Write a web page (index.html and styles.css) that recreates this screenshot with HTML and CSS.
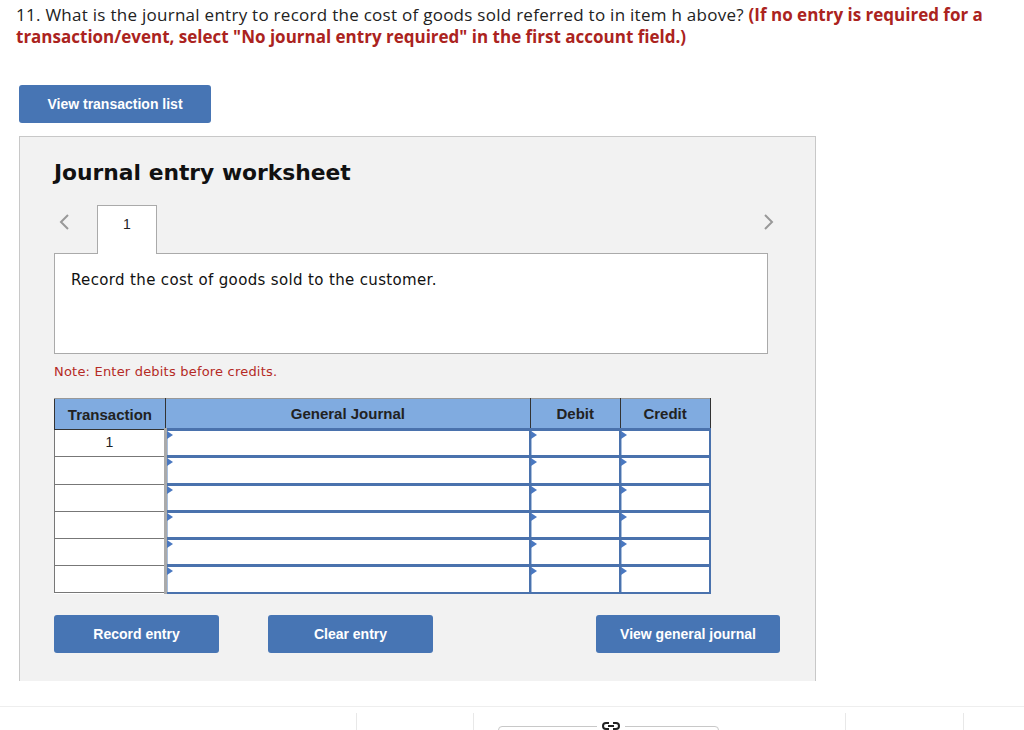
FILE: index.html
```html
<!DOCTYPE html>
<html lang="en">
<head>
    <meta charset="UTF-8">
    <title>Journal entry worksheet</title>
    <link rel="stylesheet" href="styles.css">
</head>
<body>
    <p class="question">11. What is the journal entry to record the cost of goods sold referred to in item h above? <strong>(If no entry is required for a transaction/event, select "No journal entry required" in the first account field.)</strong></p>

    <div class="main">
        <button class="btn btn-list">View transaction list</button>

        <div class="worksheet">
            <h2>Journal entry worksheet</h2>

            <div class="tabs">
                <span class="arrow">
                    <svg width="12" height="18" viewBox="0 0 12 18"><path d="M10 2 L3 9 L10 16" fill="none" stroke="#999" stroke-width="2"/></svg>
                </span>
                <div class="tab">1</div>
                <span class="arrow arrow-right">
                    <svg width="12" height="18" viewBox="0 0 12 18"><path d="M2 2 L9 9 L2 16" fill="none" stroke="#999" stroke-width="2"/></svg>
                </span>
            </div>
            <div class="desc">Record the cost of goods sold to the customer.</div>

            <p class="note">Note: Enter debits before credits.</p>

            <table class="journal">
                <thead>
                    <tr>
                        <th class="col-trans">Transaction</th>
                        <th class="col-account">General Journal</th>
                        <th class="col-amt">Debit</th>
                        <th class="col-amt">Credit</th>
                    </tr>
                </thead>
                <tbody>
                    <tr><td class="trans">1</td><td class="inp"></td><td class="inp"></td><td class="inp"></td></tr>
                    <tr><td class="trans"></td><td class="inp"></td><td class="inp"></td><td class="inp"></td></tr>
                    <tr><td class="trans"></td><td class="inp"></td><td class="inp"></td><td class="inp"></td></tr>
                    <tr><td class="trans"></td><td class="inp"></td><td class="inp"></td><td class="inp"></td></tr>
                    <tr><td class="trans"></td><td class="inp"></td><td class="inp"></td><td class="inp"></td></tr>
                    <tr><td class="trans"></td><td class="inp"></td><td class="inp"></td><td class="inp"></td></tr>
                </tbody>
            </table>

            <div class="actions">
                <button class="btn btn-action">Record entry</button>
                <button class="btn btn-action">Clear entry</button>
                <button class="btn btn-journal">View general journal</button>
            </div>
        </div>
    </div>

    <div class="footer">
        <div class="fcell fcell-1"></div>
        <div class="fcell fcell-2"></div>
        <div class="fcell fcell-3">
            <div class="linkbox">
                <svg class="link-icon" width="20" height="10" viewBox="0 0 20 10"><path d="M8 2 H5 a3 3 0 0 0 0 6 H8 M12 2 H15 a3 3 0 0 1 0 6 H12 M7 5 H13" fill="none" stroke="#222" stroke-width="2"/></svg>
            </div>
        </div>
        <div class="fcell fcell-4"></div>
        <div class="fcell fcell-5"></div>
    </div>
</body>
</html>
```

FILE: styles.css
```css
body {
    margin: 0;
    background: #fff;
    font-family: "Liberation Sans", Arial, sans-serif;
    color: #222;
    overflow: hidden;
}
.question {
    margin: 0;
    padding: 4px 20px 0 16px;
    font-family: "Open Sans", Lato, sans-serif;
    font-size: 17px;
    letter-spacing: 0.27px;
    line-height: 22px;
    color: #222;
}
.question strong {
    color: #ab2320;
    letter-spacing: 0;
}
.main {
    margin: 37px 0 0 19px;
    width: 797px;
}
.btn {
    background-color: #4775b4;
    color: #fff;
    border: none;
    border-radius: 3px;
    font-family: "Liberation Sans", Arial, sans-serif;
    font-weight: bold;
    font-size: 14px;
    height: 38px;
    padding: 0;
}
.btn-list {
    width: 192px;
    display: block;
}
.worksheet {
    margin-top: 13px;
    background: #f2f2f2;
    border: 1px solid #c8c8c8;
    border-bottom: none;
    padding: 22px 34px 28px 34px;
}
.worksheet h2 {
    margin: 0;
    font-family: "DejaVu Sans", Verdana, sans-serif;
    font-size: 21.8px;
    line-height: 28px;
    color: #111;
}
.tabs {
    display: flex;
    align-items: center;
    margin-top: 17px;
    height: 49px;
}
.arrow {
    width: 39px;
    display: flex;
    align-items: center;
    padding-left: 4px;
    margin-bottom: 14px;
}
.arrow-right {
    margin-left: auto;
    width: auto;
    padding: 0 6px 0 0;
}
.tab {
    width: 60px;
    height: 49px;
    box-sizing: border-box;
    background: #fff;
    border: 1px solid #aaa;
    border-bottom: none;
    text-align: center;
    font-size: 14px;
    line-height: 36px;
    position: relative;
    z-index: 1;
    margin-bottom: -1px;
}
.desc {
    margin-right: 13px;
    height: 101px;
    box-sizing: border-box;
    background: #fff;
    border: 1px solid #aaa;
    padding: 16px 16px;
    font-family: "DejaVu Sans", Verdana, sans-serif;
    font-size: 15px;
    letter-spacing: 0.35px;
    line-height: 20px;
    color: #111;
}
.note {
    margin: 9px 0 17px;
    font-family: "DejaVu Sans", Verdana, sans-serif;
    font-size: 13px;
    letter-spacing: 0.2px;
    line-height: 18px;
    color: #b52a25;
}
.journal {
    border-collapse: collapse;
    width: 657px;
    background: #fff;
}
.journal th {
    background: #80abe0;
    border: 1px solid #333;
    border-top-color: #999;
    height: 29px;
    padding: 0;
    font-size: 15px;
    font-weight: bold;
    color: #222;
}
.col-trans { width: 110px; }
.col-account { width: 365px; }
.col-amt { width: 89px; }
.journal td {
    height: 24.3px;
    padding: 0;
}
.trans {
    border: 1px solid #777;
    border-right: 3px solid #aaa;
    text-align: center;
    font-size: 14px;
    vertical-align: top;
    line-height: 24px;
}
.inp {
    border: 2px solid #4a72ad;
    border-top-width: 3px;
    position: relative;
    box-shadow: inset 1px 0 0 #a9bfdd;
}
.inp::before {
    content: "";
    position: absolute;
    top: 0;
    left: 0;
    border-left: 6px solid #4a78c0;
    border-top: 4px solid transparent;
    border-bottom: 4px solid transparent;
}
.actions {
    display: flex;
    gap: 49px;
    margin-top: 21px;
}
.btn-action {
    width: 165px;
}
.btn-journal {
    width: 184px;
    margin-left: auto;
    margin-right: 1px;
}
.footer {
    margin-top: 25px;
    border-top: 1px solid #eee;
    display: flex;
    height: 40px;
    padding-top: 6px;
}
.fcell {
    border-right: 1px solid #e8e8e8;
}
.fcell-1 { width: 356px; }
.fcell-2 { width: 116px; }
.fcell-3 { width: 371px; position: relative; }
.fcell-4 { width: 117px; }
.fcell-5 { flex: 1; border-right: none; }
.linkbox {
    margin: 13px 0 0 24px;
    width: 219px;
    height: 30px;
    border: 1px solid #c8c8c8;
    border-radius: 4px;
    position: relative;
}
.link-icon {
    position: absolute;
    top: -6px;
    left: 98px;
    background: #fff;
    padding: 0 4px;
}
```
